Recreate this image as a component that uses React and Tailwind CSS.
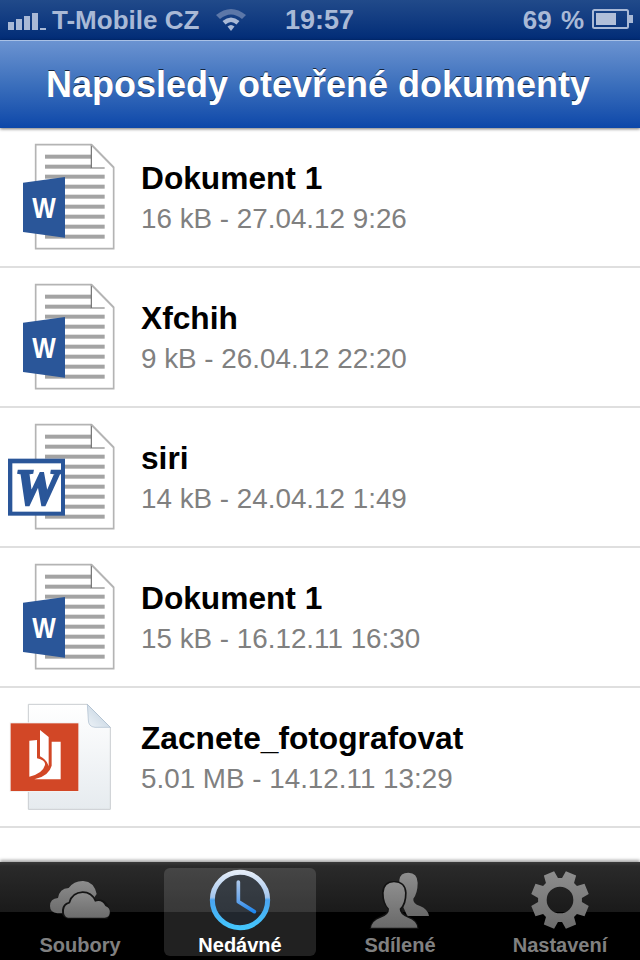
const FONT = "font-['Liberation_Sans',Arial,sans-serif]";

function DocPage({ children }) {
  const ys = [65, 95, 125, 155, 185, 215, 245, 275, 305];
  return (
    <svg width="130" height="125" viewBox="0 0 390 375" className="block shrink-0">
      <path d="M107 29 H274 L341 97 V341 H107 Z" fill="#fff" stroke="#b4b4b4" strokeWidth="5" />
      {ys.map((y, i) => (
        <rect key={y} x="135" y={y - 6} width={i < 2 ? 138 : 179} height="12" fill="#a3a3a3" />
      ))}
      <path d="M274 29 V99 H314" fill="none" stroke="#6f6f6f" strokeWidth="3.5" />
      <path d="M274 29 L341 97" fill="none" stroke="#b4b4b4" strokeWidth="5" />
      {children}
    </svg>
  );
}

function WordNew() {
  return (
    <DocPage>
      <path d="M69 143 L195 126 V308 L69 291 Z" fill="#2a5699" />
      <text transform="translate(132 249) scale(0.85 1)" textAnchor="middle" fontFamily="'Liberation Sans',Arial,sans-serif" fontWeight="700" fontSize="88" fill="#fff">W</text>
    </DocPage>
  );
}

function WordOld() {
  return (
    <DocPage>
      <rect x="24" y="131" width="171" height="171" fill="#2a5699" />
      <rect x="37" y="145" width="146" height="145" fill="#fff" />
      <text x="112" y="268" textAnchor="middle" fontFamily="'Liberation Serif',serif" fontWeight="700" fontStyle="italic" fontSize="150" fill="#2a5699" stroke="#2a5699" strokeWidth="7">W</text>
    </DocPage>
  );
}

function PdfIcon() {
  return (
    <svg width="130" height="125" viewBox="0 0 390 375" className="block shrink-0">
      <defs>
        <linearGradient id="pg" x1="0" y1="0" x2="0" y2="1">
          <stop offset="0" stopColor="#ffffff" />
          <stop offset="1" stopColor="#e6ebef" />
        </linearGradient>
        <linearGradient id="fold" x1="0" y1="1" x2="1" y2="0">
          <stop offset="0" stopColor="#eef3f7" />
          <stop offset="1" stopColor="#b9cbdc" />
        </linearGradient>
      </defs>
      <path d="M85 28 H262 L331 97 V343 H85 Z" fill="url(#pg)" stroke="#c9cdd1" strokeWidth="3" />
      <path d="M262 28 L331 97 H285 Q265 95 265 75 Z" fill="url(#fold)" stroke="#a8bacb" strokeWidth="2" />
      <rect x="29" y="82" width="209" height="209" fill="#f2f2f2" />
      <rect x="32" y="85" width="203" height="203" fill="#d24726" />
      <path d="M88 137 L111 135 V190 Q137 196 135 210 Q128 236 88 245 Z" fill="#fff" />
      <path d="M120 105 L146 126 V214 Q140 194 120 184 Z" fill="#fff" />
      <path d="M155 140 H182 V253 H103 Q147 243 155 212 Z" fill="#fff" />
    </svg>
  );
}

function TabIcon({ x, children }) {
  return (
    <svg width="160" height="70" viewBox={`${x} 135 480 210`} className="block">
      {children}
    </svg>
  );
}

function Cloud() {
  return (
    <TabIcon x={0}>
      <defs>
        <linearGradient id="cl" x1="0" y1="0" x2="0" y2="1">
          <stop offset="0" stopColor="#8c8c8c" />
          <stop offset="1" stopColor="#6c6c6c" />
        </linearGradient>
      </defs>
      <path d="M172 280 Q150 278 150 258 Q150 236 174 234 Q178 206 206 204 Q222 182 250 183 Q282 185 290 222 L250 280 Z" fill="url(#cl)" />
      <path d="M204 296 Q184 294 186 270 Q188 250 206 246 Q214 216 248 214 Q276 214 288 240 Q308 234 320 250 Q326 256 326 262 Q338 280 322 296 Z" fill="#141414" />
      <path d="M204 293 Q190 291 192 270 Q194 254 210 250 Q218 220 248 219 Q274 219 285 245 Q306 238 316 258 Q332 264 329 280 Q327 293 314 293 Z" fill="url(#cl)" />
    </TabIcon>
  );
}

function Clock() {
  return (
    <TabIcon x={480}>
      <defs>
        <linearGradient id="ring" x1="0" y1="0" x2="0" y2="1">
          <stop offset="0" stopColor="#e3ecf8" />
          <stop offset="0.45" stopColor="#a5c6ee" />
          <stop offset="0.5" stopColor="#4aa4f0" />
          <stop offset="1" stopColor="#44c6fd" />
        </linearGradient>
        <linearGradient id="hand" x1="0" y1="0" x2="0" y2="1">
          <stop offset="0" stopColor="#a9c6ea" />
          <stop offset="0.6" stopColor="#6ba6ea" />
          <stop offset="1" stopColor="#1f88f0" />
        </linearGradient>
      </defs>
      <circle cx="720" cy="240" r="83" fill="#20344d" fillOpacity="0.3" stroke="url(#ring)" strokeWidth="15" />
      <path d="M715 186 V245 L763 275" fill="none" stroke="url(#hand)" strokeWidth="11" strokeLinecap="round" strokeLinejoin="round" />
    </TabIcon>
  );
}

function People() {
  return (
    <TabIcon x={0}>
      <defs>
        <linearGradient id="pe" x1="0" y1="0" x2="0" y2="1">
          <stop offset="0" stopColor="#8e8e8e" />
          <stop offset="1" stopColor="#696969" />
        </linearGradient>
      </defs>
      <path d="M238 180 Q240 158 265 158 Q292 158 293 188 Q293 218 280 236 Q278 250 300 258 Q324 268 327 288 H262 L240 240 Z" fill="url(#pe)" />
      <path d="M186 218 Q188 184 222 183 Q258 184 260 218 Q260 254 244 268 Q244 280 268 290 Q294 300 296 327 H149 Q152 300 178 290 Q202 282 204 268 Q186 250 186 218 Z" fill="#121212" />
      <path d="M191 218 Q193 188 222 187 Q254 188 255 218 Q255 252 239 266 Q238 282 264 293 Q290 302 292 323 H153 Q156 302 182 293 Q208 284 207 266 Q191 250 191 218 Z" fill="url(#pe)" />
    </TabIcon>
  );
}

function gearPath() {
  const cx = 720, cy = 240, teeth = 8, ro = 88, ri = 66;
  let d = "";
  for (let i = 0; i < teeth; i++) {
    const a = ((i * 360) / teeth - 90 + 22.5) * (Math.PI / 180);
    const w1 = 0.3, w2 = 0.19;
    const pts = [
      [ri, a - w1],
      [ro, a - w2],
      [ro, a + w2],
      [ri, a + w1],
    ];
    pts.forEach(([r, t], j) => {
      const p = `${(cx + r * Math.cos(t)).toFixed(1)} ${(cy + r * Math.sin(t)).toFixed(1)}`;
      d += i === 0 && j === 0 ? `M${p} ` : `L${p} `;
    });
  }
  d += "Z M760 240 A40 40 0 1 0 680 240 A40 40 0 1 0 760 240 Z";
  return d;
}

function Gear() {
  return (
    <TabIcon x={480}>
      <defs>
        <linearGradient id="ge" x1="0" y1="0" x2="0" y2="1">
          <stop offset="0" stopColor="#8e8e8e" />
          <stop offset="1" stopColor="#6c6c6c" />
        </linearGradient>
      </defs>
      <path d={gearPath()} fill="url(#ge)" fillRule="evenodd" />
    </TabIcon>
  );
}

function Row({ icon, title, sub }) {
  return (
    <div className="flex h-[140px] items-center border-b-2 border-[#dfdfdf] bg-white pt-[2px]">
      <div className="-mt-px w-[141px] shrink-0">{icon}</div>
      <div className="min-w-0">
        <div className="text-[31.7px] font-bold leading-[40px] text-black">{title}</div>
        <div className="mt-px -mb-px text-[27.8px] leading-[40px] text-[#808080]">{sub}</div>
      </div>
    </div>
  );
}

function Tab({ icon, label, active }) {
  return (
    <div className="flex w-[160px] justify-center">
      <div className={`flex h-[88px] w-[152px] flex-col items-center rounded-[6px] ${active ? "bg-white/[0.13]" : ""}`}>
        <div className="-mt-[3px] flex h-[70px] w-[160px] justify-center">{icon}</div>
        <div className={`-mt-px text-[20px] font-bold leading-[22px] ${active ? "text-white" : "text-[#808080]"}`}>{label}</div>
      </div>
    </div>
  );
}

export default function App() {
  return (
    <div className={`flex h-[960px] w-[640px] flex-col overflow-hidden bg-white ${FONT}`}>
      <div className="flex h-[40px] shrink-0 items-center bg-gradient-to-b from-[#214a8a] to-[#022c77] pl-2 pr-[6px] font-bold leading-none text-[#a9b9d6]">
        <div className="flex w-[277px] shrink-0 items-center">
          <div className="flex h-[20px] items-end gap-[2px]">
            <div className="h-[8px] w-[6px] bg-[#a9b9d6]" />
            <div className="h-[11px] w-[6px] bg-[#a9b9d6]" />
            <div className="h-[14px] w-[6px] bg-[#a9b9d6]" />
            <div className="h-[17px] w-[6px] bg-[#a9b9d6]" />
            <div className="h-[2px] w-[6px] bg-[#a9b9d6]" />
          </div>
          <span className="ml-[6px] whitespace-nowrap text-[26px]">T-Mobile CZ</span>
          <svg width="32" height="26" viewBox="0 0 32 26" className="ml-[16px] shrink-0">
            <path d="M1 8 Q16 -4 31 8 L27 12 Q16 3 5 12 Z" fill="#5c77a8" />
            <path d="M7.5 14 Q16 7 24.5 14 L21.5 17.5 Q16 12.5 10.5 17.5 Z" fill="#a9b9d6" />
            <path d="M12.5 19.5 Q16 16.5 19.5 19.5 L16 24 Z" fill="#a9b9d6" />
          </svg>
        </div>
        <div className="text-[27px]">19:57</div>
        <div className="ml-auto flex items-center">
          <span className="whitespace-nowrap text-[26px] [word-spacing:2px]">69 %</span>
          <svg width="42" height="22" viewBox="0 0 42 22" className="ml-[8px] shrink-0">
            <rect x="1" y="1" width="35" height="18" rx="1.5" fill="none" stroke="#a9b9d6" strokeWidth="2" />
            <rect x="4" y="4" width="20" height="12" fill="#b1bfd9" />
            <rect x="37" y="6" width="4" height="8" fill="#a9b9d6" />
          </svg>
        </div>
      </div>

      <div className="relative z-10 flex h-[88px] shrink-0 items-center justify-center border-t border-[#a9c1e6] bg-gradient-to-b from-[#6b93d1] via-[#3b6fbc] to-[#0b47a9] pt-px pr-[4px] text-[36px] font-bold text-white shadow-[0_1px_3px_rgba(0,0,0,0.55)] [text-shadow:0_-1px_0_rgba(0,0,0,0.7)]">
        Naposledy otevřené dokumenty
      </div>

      <div className="min-h-0 flex-1">
        <Row icon={<WordNew />} title="Dokument 1" sub="16 kB - 27.04.12 9:26" />
        <Row icon={<WordNew />} title="Xfchih" sub="9 kB - 26.04.12 22:20" />
        <Row icon={<WordOld />} title="siri" sub="14 kB - 24.04.12 1:49" />
        <Row icon={<WordNew />} title="Dokument 1" sub="15 kB - 16.12.11 16:30" />
        <Row icon={<PdfIcon />} title="Zacnete_fotografovat" sub="5.01 MB - 14.12.11 13:29" />
      </div>

      <div className="relative flex h-[98px] shrink-0 justify-center bg-[linear-gradient(to_bottom,#3a3a3a_0px,#2a2a2a_4px,#1a1a1a_50px,#000_50px,#000_100%)] pt-[6px] shadow-[0_-2px_3px_rgba(0,0,0,0.35)]">
        <Tab icon={<Cloud />} label="Soubory" />
        <Tab icon={<Clock />} label="Nedávné" active />
        <Tab icon={<People />} label="Sdílené" />
        <Tab icon={<Gear />} label="Nastavení" />
      </div>
    </div>
  );
}
